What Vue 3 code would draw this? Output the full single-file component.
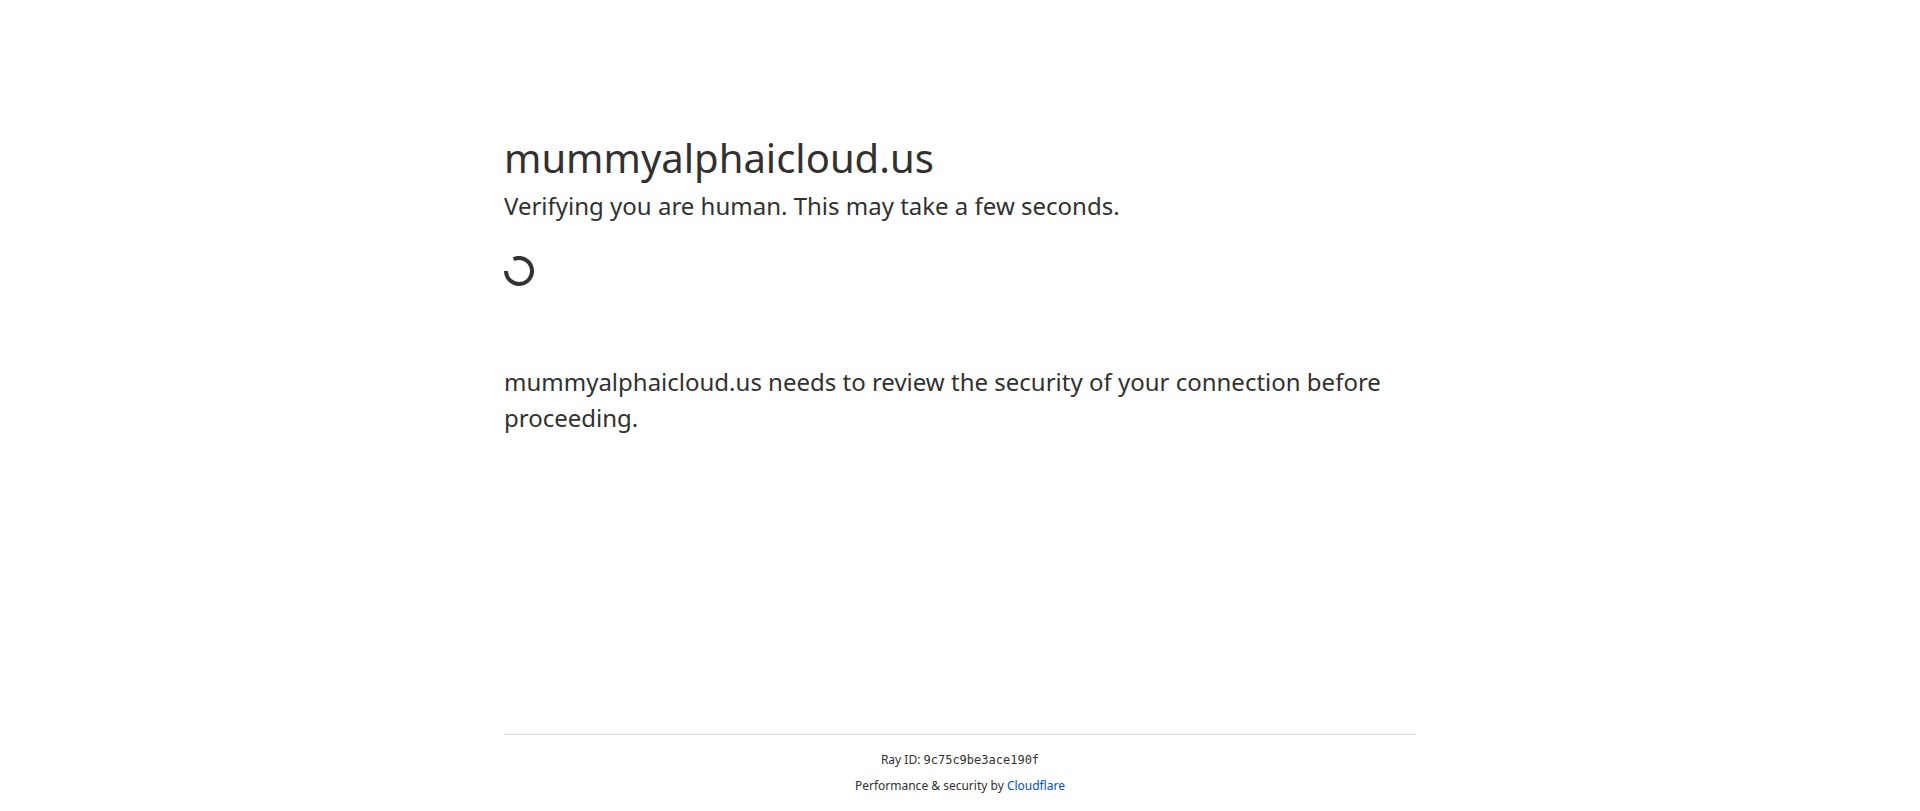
<template>
  <div class="page">
    <main class="main">
      <h1 class="host">mummyalphaicloud.us</h1>
      <p class="verify">Verifying you are human. This may take a few seconds.</p>
      <div class="spinner-wrap">
        <svg class="spinner" width="30" height="30" viewBox="0 0 30 30">
          <path d="M9.5 3.2 A13 13 0 1 1 2 15" fill="none" stroke="#333" stroke-width="4" />
        </svg>
      </div>
      <p class="review">mummyalphaicloud.us needs to review the security of your connection before proceeding.</p>
    </main>
    <footer class="foot">
      <div class="ray">Ray ID: <code>9c75c9be3ace190f</code></div>
      <div class="perf">Performance &amp; security by <a href="#">Cloudflare</a></div>
    </footer>
  </div>
</template>

<script setup>
</script>

<style scoped>
.page {
  width: 912px;
  margin: 0 auto;
  height: 811px;
  display: flex;
  flex-direction: column;
  font-family: "Noto Sans", sans-serif;
  color: #313131;
}
.main {
  flex: 1;
  padding-top: 128px;
}
.host {
  margin: 0;
  font-size: 40px;
  font-weight: 400;
  line-height: 60px;
}
.verify {
  margin: 0;
  font-size: 24px;
  line-height: 36px;
}
.spinner-wrap {
  margin-top: 32px;
  height: 30px;
}
.spinner {
  display: block;
}
.review {
  margin: 78px 0 0;
  font-size: 24px;
  line-height: 36px;
}
.foot {
  border-top: 1px solid #d9d9d9;
  padding-top: 16px;
  height: 77px;
  box-sizing: border-box;
  text-align: center;
  font-size: 12px;
  line-height: 18px;
}
.ray {
  margin-bottom: 8px;
}
.ray code {
  font-family: "DejaVu Sans Mono", monospace;
  font-size: 12px;
}
.perf a {
  color: #0051c3;
  text-decoration: none;
}
</style>
